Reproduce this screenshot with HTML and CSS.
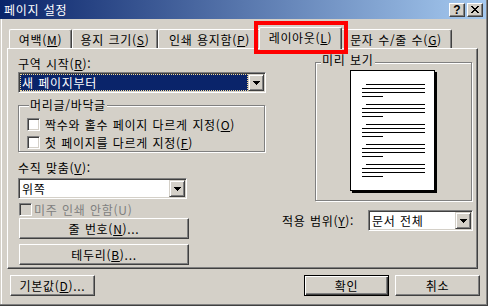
FILE: index.html
```html
<!DOCTYPE html>
<html lang="ko">
<head>
<meta charset="utf-8">
<title>페이지 설정</title>
<link rel="stylesheet" href="styles.css">
</head>
<body>
<div class="window">
  <div class="titlebar">
    <span class="title">페이지 설정</span>
    <div class="caption-btns">
      <span class="cbtn help">?</span>
      <span class="cbtn close">
        <svg width="8" height="7" viewBox="0 0 8 7" shape-rendering="crispEdges"><path fill="#000" d="M0 0h2v1H0zM6 0h2v1H6zM1 1h2v1H1zM5 1h2v1H5zM2 2h4v1H2zM3 3h2v1H3zM2 4h4v1H2zM1 5h2v1H1zM5 5h2v1H5zM0 6h2v1H0zM6 6h2v1H6z"/></svg>
      </span>
    </div>
  </div>

  <div class="tabs">
    <div class="tab t1">여백(<u>M</u>)</div>
    <div class="tab t2">용지 크기(<u>S</u>)</div>
    <div class="tab t3">인쇄 용지함(<u>P</u>)</div>
    <div class="tab t4 active">레이아웃(<u>L</u>)</div>
    <div class="tab t5">문자 수/줄 수(<u>G</u>)</div>
  </div>

  <div class="panel">
    <div class="col-left">
      <div class="field-label">구역 시작(<u>R</u>):</div>
      <div class="combo c-section">
        <div class="combo-value selected"><span>새 페이지부터</span></div>
        <div class="combo-arrow"><svg width="7" height="4" viewBox="0 0 7 4" shape-rendering="crispEdges"><path fill="#000" d="M0 0h7v1H0zM1 1h5v1H1zM2 2h3v1H2zM3 3h1v1H3z"/></svg></div>
      </div>

      <div class="group g-header">
        <div class="group-title">머리글/바닥글</div>
        <div class="check-row r1"><span class="cb"></span><span>짝수와 홀수 페이지 다르게 지정(<u>O</u>)</span></div>
        <div class="check-row r2"><span class="cb"></span><span>첫 페이지를 다르게 지정(<u>F</u>)</span></div>
      </div>

      <div class="field-label l-vert">수직 맞춤(<u>V</u>):</div>
      <div class="combo c-vert">
        <div class="combo-value"><span>위쪽</span></div>
        <div class="combo-arrow"><svg width="7" height="4" viewBox="0 0 7 4" shape-rendering="crispEdges"><path fill="#000" d="M0 0h7v1H0zM1 1h5v1H1zM2 2h3v1H2zM3 3h1v1H3z"/></svg></div>
      </div>

      <div class="check-row disabled"><span class="cb off"></span><span>미주 인쇄 안함(U)</span></div>

      <div class="btn wide b-line">줄 번호(<u>N</u>)...</div>
      <div class="btn wide b-border">테두리(<u>B</u>)...</div>
    </div>

    <div class="col-right">
      <div class="group g-preview">
        <div class="group-title">미리 보기</div>
        <svg class="page" width="87" height="123" viewBox="0 0 87 123" shape-rendering="crispEdges">
          <defs>
            <g id="para" fill="#000">
              <rect x="16" y="0" width="59" height="1"/>
              <rect x="12" y="4" width="63" height="1"/>
              <rect x="12" y="8" width="63" height="1"/>
              <rect x="12" y="12" width="21" height="1"/>
            </g>
          </defs>
          <rect x="2" y="2" width="85" height="121" fill="#000"/>
          <rect x="0.5" y="0.5" width="84" height="120" fill="#fff" stroke="#000"/>
          <use href="#para" y="14"/>
          <use href="#para" y="34"/>
          <use href="#para" y="54"/>
          <use href="#para" y="74"/>
          <use href="#para" y="94"/>
        </svg>
      </div>
      <div class="apply-row">
        <span>적용 범위(<u>Y</u>):</span>
        <div class="combo c-apply">
          <div class="combo-value"><span>문서 전체</span></div>
          <div class="combo-arrow"><svg width="7" height="4" viewBox="0 0 7 4" shape-rendering="crispEdges"><path fill="#000" d="M0 0h7v1H0zM1 1h5v1H1zM2 2h3v1H2zM3 3h1v1H3z"/></svg></div>
        </div>
      </div>
    </div>
  </div>

  <div class="footer">
    <div class="btn">기본값(<u>D</u>)...</div>
    <div class="btn default btn-ok">확인</div>
    <div class="btn btn-cancel">취소</div>
  </div>

  <div class="highlight"></div>
</div>
</body>
</html>
```

FILE: styles.css
```css
* { box-sizing: border-box; }
html, body { margin: 0; padding: 0; }
body {
  width: 488px;
  height: 306px;
  overflow: hidden;
  background: #D4D0C8;
  font-family: "Noto Sans CJK KR", "Noto Sans", sans-serif;
  font-size: 12px;
  line-height: 14px;
  color: #000;
  letter-spacing: 0.7px;
  word-spacing: 0.5px;
}
u { text-decoration: underline; text-underline-offset: 1px; }

.window {
  position: relative;
  width: 488px;
  height: 306px;
  background: #D4D0C8;
  box-shadow: inset -1px -1px 0 #404040, inset -2px -2px 0 #808080, inset 1px 0 0 #D4D0C8, inset 2px 0 0 #fff;
}

/* title bar */
.titlebar {
  display: flex;
  align-items: center;
  justify-content: space-between;
  width: 486px;
  height: 19px;
  padding: 0 3px 0 4px;
  background: linear-gradient(to right, #0A246A, #A6CAF0);
}
.title { color: #fff; }
.caption-btns { display: flex; gap: 2px; }
.cbtn {
  width: 16px;
  height: 14px;
  display: flex;
  align-items: center;
  justify-content: center;
  background: #D4D0C8;
  border: 1px solid;
  border-color: #fff #404040 #404040 #fff;
  box-shadow: inset -1px -1px 0 #808080;
  letter-spacing: 0;
}
.cbtn.help {
  font-family: "Liberation Sans", sans-serif;
  font-weight: bold;
  font-size: 12px;
  line-height: 12px;
}

/* tabs */
.tabs {
  position: relative;
  z-index: 1;
  display: flex;
  align-items: flex-end;
  height: 21px;
  margin: 8px 0 0 9px;
}
.tab {
  height: 19px;
  display: flex;
  align-items: center;
  justify-content: center;
  padding-top: 2px;
  background: #D4D0C8;
  border-top: 1px solid #fff;
  border-left: 1px solid #fff;
  border-right: 1px solid #404040;
  box-shadow: inset -1px 0 0 #808080;
  border-radius: 2px 2px 0 0;
  white-space: nowrap;
}
.t1 { width: 63px; }
.t2 { width: 86px; }
.t3 { width: 103px; }
.t4 { width: 83px; }
.t5 { width: 112px; }
.tab.active {
  position: relative;
  z-index: 2;
  height: 22px;
  margin: 0 -2px -1px;
  padding-top: 0;
  padding-bottom: 2px;
}

/* panel */
.panel {
  display: flex;
  gap: 16px;
  width: 471px;
  height: 221px;
  margin-left: 7px;
  padding: 8px 4px 0 10px;
  border: 1px solid;
  border-color: #fff #404040 #404040 #fff;
  box-shadow: inset -1px -1px 0 #808080;
}
.col-left { width: 248px; flex: none; }
.col-right { width: 191px; flex: none; }

.field-label { height: 14px; white-space: nowrap; }

.combo {
  display: flex;
  height: 21px;
  padding: 1px;
  background: #fff;
  border: 1px solid;
  border-color: #808080 #fff #fff #808080;
  box-shadow: inset 1px 1px 0 #404040, inset -1px -1px 0 #D4D0C8;
}
.combo-value {
  flex: 1;
  display: flex;
  align-items: center;
  padding-left: 2px;
  white-space: nowrap;
  overflow: hidden;
}
.combo-value.selected {
  background: #0A246A;
  color: #fff;
  outline: 1px dotted #F5DB95;
  outline-offset: -1px;
}
.combo-arrow {
  width: 16px;
  height: 17px;
  flex: none;
  display: flex;
  align-items: center;
  justify-content: center;
  background: #D4D0C8;
  border: 1px solid;
  border-color: #D4D0C8 #404040 #404040 #D4D0C8;
  box-shadow: inset 1px 1px 0 #fff, inset -1px -1px 0 #808080;
}
.c-section { width: 248px; margin-top: 1px; }
.c-vert { width: 169px; margin-top: 3px; }
.c-apply { width: 105px; margin-left: auto; }

/* group boxes */
.group {
  border: 1px solid #808080;
  box-shadow: inset 1px 1px 0 #fff, 1px 1px 0 #fff;
}
.group-title {
  width: max-content;
  padding: 0 1px;
  background: #D4D0C8;
}
.g-header {
  width: 247px;
  height: 47px;
  margin-top: 12px;
  padding: 0 8px;
}
.g-header .group-title { margin: -8px 0 0 2px; }
.g-preview {
  width: 157px;
  height: 139px;
  margin: 5px 0 0 33px;
}
.g-preview .group-title { margin: -10px 0 0 5px; }
.page { display: block; margin: 3px 0 0 34px; }

/* checkboxes */
.check-row {
  display: flex;
  align-items: center;
  height: 13px;
  white-space: nowrap;
}
.r1 { margin-top: 6px; }
.r2 { margin-top: 5px; }
.cb {
  width: 13px;
  height: 13px;
  flex: none;
  margin-right: 5px;
  background: #fff;
  border: 1px solid;
  border-color: #808080 #fff #fff #808080;
  box-shadow: inset 1px 1px 0 #404040, inset -1px -1px 0 #D4D0C8;
}
.check-row.disabled {
  margin: 4px 0 0 1px;
  color: #808080;
}
.cb.off { background: #D4D0C8; margin-right: 2px; }

.l-vert { margin-top: 9px; }

/* buttons */
.btn {
  display: flex;
  align-items: center;
  justify-content: center;
  height: 21px;
  width: 85px;
  background: #D4D0C8;
  border: 1px solid;
  border-color: #fff #404040 #404040 #fff;
  box-shadow: inset -1px -1px 0 #808080;
  white-space: nowrap;
}
.btn.default {
  border: 1px solid #000;
  box-shadow: inset 1px 1px 0 #fff, inset -1px -1px 0 #404040, inset -2px -2px 0 #808080;
}
.btn.wide { width: 170px; margin-left: 1px; }
.b-line { margin-top: 2px; }
.b-border { margin-top: 5px; }

.apply-row {
  display: flex;
  align-items: center;
  margin-top: 9px;
  white-space: nowrap;
}

.footer {
  display: flex;
  margin: 6px 0 0 10px;
  padding-right: 8px;
}
.btn-ok { margin-left: auto; }
.btn-cancel { margin-left: 6px; }

/* red annotation box over the active tab */
.highlight {
  position: absolute;
  left: 254px;
  top: 21px;
  width: 94px;
  height: 33px;
  border: 4px solid #FF0000;
  z-index: 5;
}
```
